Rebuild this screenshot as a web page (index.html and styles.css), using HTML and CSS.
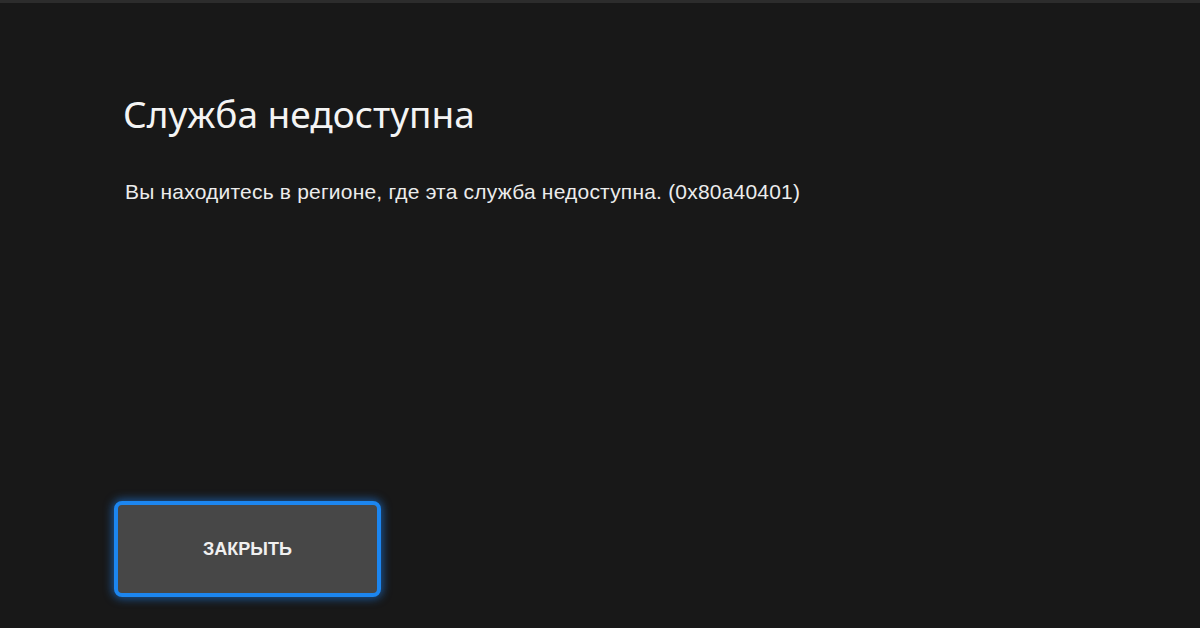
FILE: index.html
```html
<!DOCTYPE html>
<html lang="ru">
<head>
    <meta charset="UTF-8">
    <meta name="viewport" content="width=device-width, initial-scale=1.0">
    <title>Служба недоступна</title>
    <link rel="stylesheet" href="styles.css">
</head>
<body>
    <div class="top-strip"></div>
    <div class="dialog">
        <div class="dialog-text">
            <h1>Служба недоступна</h1>
            <p>Вы находитесь в регионе, где эта служба недоступна. (0x80a40401)</p>
        </div>
        <div class="dialog-actions">
            <button class="close-btn">ЗАКРЫТЬ</button>
        </div>
    </div>
</body>
</html>
```

FILE: styles.css
```css
body {
    margin: 0;
    padding: 0;
    width: 1200px;
    height: 628px;
    background-color: #181818;
    font-family: 'Noto Sans', 'DejaVu Sans', sans-serif;
    color: #f2f2f2;
    overflow: hidden;
    display: flex;
    flex-direction: column;
}
.top-strip {
    height: 3px;
    background-color: #2c2c2c;
}
.dialog {
    flex: 1;
    display: flex;
    flex-direction: column;
    justify-content: space-between;
    padding: 86px 0 31px 114px;
}
.dialog-text {
    padding-left: 9px;
}
h1 {
    margin: 0;
    font-size: 37px;
    font-weight: 400;
    line-height: 50px;
    color: #f4f4f4;
}
p {
    margin: 41px 0 0 2px;
    font-family: 'Liberation Sans', Arial, sans-serif;
    font-size: 21px;
    letter-spacing: 0.2px;
    color: #ececec;
}
.dialog-actions {
    display: flex;
}
.close-btn {
    width: 267px;
    height: 96px;
    background-color: #474747;
    border: 4px solid #1c86f0;
    border-radius: 8px;
    box-shadow: 0 0 8px 2px rgba(30, 130, 240, 0.55);
    color: #f0f0f0;
    font-family: 'Liberation Sans', Arial, sans-serif;
    font-weight: 700;
    font-size: 18px;
    cursor: pointer;
}
```
